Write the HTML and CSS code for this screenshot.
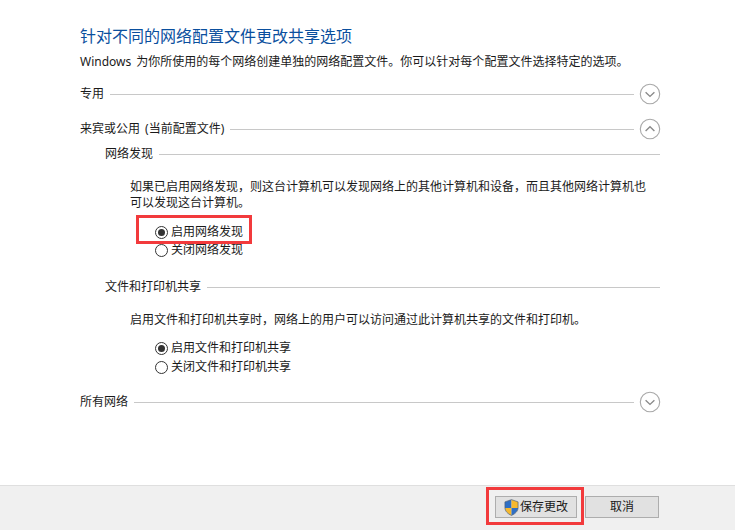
FILE: index.html
```html
<!DOCTYPE html>
<html lang="zh-CN">
<head>
<meta charset="utf-8">
<title>高级共享设置</title>
<link rel="stylesheet" href="styles.css">
</head>
<body>
<div class="window">
  <main class="content">
    <h1 class="title">针对不同的网络配置文件更改共享选项</h1>
    <p class="intro">Windows 为你所使用的每个网络创建单独的网络配置文件。你可以针对每个配置文件选择特定的选项。</p>

    <div class="section-head head-private">
      <span>专用</span><span class="rule"></span>
      <svg class="chev" width="22" height="22" viewBox="0 0 22 22"><circle cx="11" cy="11" r="9.7" fill="#fff" stroke="#a8a8a8" stroke-width="1.1"/><path d="M6.6 9.2 11 13.4 15.4 9.2" fill="none" stroke="#8a8a8a" stroke-width="1.4"/></svg>
    </div>

    <div class="section-head head-guest">
      <span class="spaced">来宾或公用 (当前配置文件)</span><span class="rule"></span>
      <svg class="chev" width="22" height="22" viewBox="0 0 22 22"><circle cx="11" cy="11" r="9.7" fill="#fff" stroke="#a8a8a8" stroke-width="1.1"/><path d="M6.6 13 11 8.8 15.4 13" fill="none" stroke="#8a8a8a" stroke-width="1.4"/></svg>
    </div>

    <section class="sub">
      <div class="sub-head head-discovery"><span>网络发现</span><span class="rule"></span></div>
      <p class="desc desc-discovery">如果已启用网络发现，则这台计算机可以发现网络上的其他计算机和设备，而且其他网络计算机也可以发现这台计算机。</p>
      <div class="radios radios-discovery">
        <label class="radio"><span class="dot on"></span>启用网络发现</label>
        <label class="radio"><span class="dot"></span>关闭网络发现</label>
      </div>
    </section>

    <section class="sub">
      <div class="sub-head head-files"><span>文件和打印机共享</span><span class="rule"></span></div>
      <p class="desc desc-files">启用文件和打印机共享时，网络上的用户可以访问通过此计算机共享的文件和打印机。</p>
      <div class="radios radios-files">
        <label class="radio"><span class="dot on"></span>启用文件和打印机共享</label>
        <label class="radio"><span class="dot"></span>关闭文件和打印机共享</label>
      </div>
    </section>

    <div class="section-head head-all">
      <span>所有网络</span><span class="rule"></span>
      <svg class="chev" width="22" height="22" viewBox="0 0 22 22"><circle cx="11" cy="11" r="9.7" fill="#fff" stroke="#a8a8a8" stroke-width="1.1"/><path d="M6.6 9.2 11 13.4 15.4 9.2" fill="none" stroke="#8a8a8a" stroke-width="1.4"/></svg>
    </div>
  </main>

  <footer class="footer">
    <button class="btn btn-save" type="button">
      <svg width="15" height="17" viewBox="0 0 16 18"><path d="M8 .6 1 3v6.400h7Z" fill="#2f6fc4"/><path d="M8 .6V9.400h7V3Z" fill="#f5b82e"/><path d="M1 9.400c.3 3.600 3.200 6.400 7 8V9.400Z" fill="#f5b82e"/><path d="M15 9.400H8v8c3.800-1.600 6.700-4.400 7-8Z" fill="#2f6fc4"/><path d="M8 .6 1 3v6c0 4 3 6.800 7 8.400 4-1.600 7-4.400 7-8.400V3Z" fill="none" stroke="#4a5a70" stroke-width=".7"/></svg>
      <span>保存更改</span>
    </button>
    <button class="btn btn-cancel" type="button">取消</button>
  </footer>

  <div class="mark mark-radio"></div>
  <div class="mark mark-save"></div>
</div>
</body>
</html>
```
FILE: styles.css
```css
* { box-sizing: border-box; }
html, body { margin: 0; padding: 0; }
body {
  background: #fff;
  color: #1a1a1a;
  font-family: "Noto Sans", "Noto Sans CJK SC", sans-serif;
  font-size: 12px;
  line-height: 16px;
}
.window {
  position: relative;
  width: 735px;
  height: 530px;
  display: flex;
  flex-direction: column;
  overflow: hidden;
}
.content {
  flex: 1;
  padding: 26px 75px 0 80px;
}
.title {
  margin: 0;
  font-size: 16px;
  font-weight: 400;
  line-height: 20px;
  color: #0a4f9e;
}
.intro { margin: 8px 0 0; white-space: nowrap; word-spacing: 2px; }
.spaced { word-spacing: 2px; }
p { margin: 0; }

.section-head, .sub-head {
  display: flex;
  align-items: center;
  gap: 6px;
  white-space: nowrap;
}
.section-head { height: 22px; }
.sub-head { height: 16px; margin-left: 25px; }
.rule { flex: 1; height: 1px; background: #c8c8c8; }
.chev { flex: none; margin-left: -1px; margin-right: -1px; }

.head-private { margin-top: 13px; }
.head-guest { margin-top: 13px; }
.head-discovery { margin-top: 6px; }
.head-files { margin-top: 21px; }
.head-all { margin-top: 16px; }

.desc { margin-left: 50px; width: 525px; }
.desc-discovery { margin-top: 17px; }
.desc-files { margin-top: 17px; }

.radios { margin-left: 75px; display: flex; flex-direction: column; }
.radios-discovery { margin-top: 13px; gap: 2px; }
.radios-files { margin-top: 12px; gap: 3px; }
.radio { display: flex; align-items: center; gap: 3px; height: 16px; }
.dot {
  width: 13px;
  height: 13px;
  border-radius: 50%;
  border: 1px solid #333;
  background: #fff;
  position: relative;
  flex: none;
}
.dot.on::after {
  content: "";
  position: absolute;
  left: 2px;
  top: 2px;
  width: 7px;
  height: 7px;
  border-radius: 50%;
  background: #333;
}

.footer {
  height: 45px;
  flex: none;
  background: #f0f0f0;
  border-top: 1px solid #dfdfdf;
  display: flex;
  justify-content: flex-end;
  align-items: flex-start;
  gap: 8px;
  padding: 10px 76px 0 0;
}
.btn {
  height: 22px;
  border: 1px solid #adadad;
  background: #e1e1e1;
  color: #1a1a1a;
  font: inherit;
  padding: 0;
  display: flex;
  align-items: center;
  justify-content: center;
}
.btn-save { width: 82px; gap: 1px; }
.btn-cancel { width: 74px; }

.mark { position: absolute; border: 3px solid #f23a3c; }
.mark-radio { left: 136px; top: 215px; width: 116px; height: 29px; }
.mark-save { left: 486px; top: 487px; width: 98px; height: 38px; }
```
